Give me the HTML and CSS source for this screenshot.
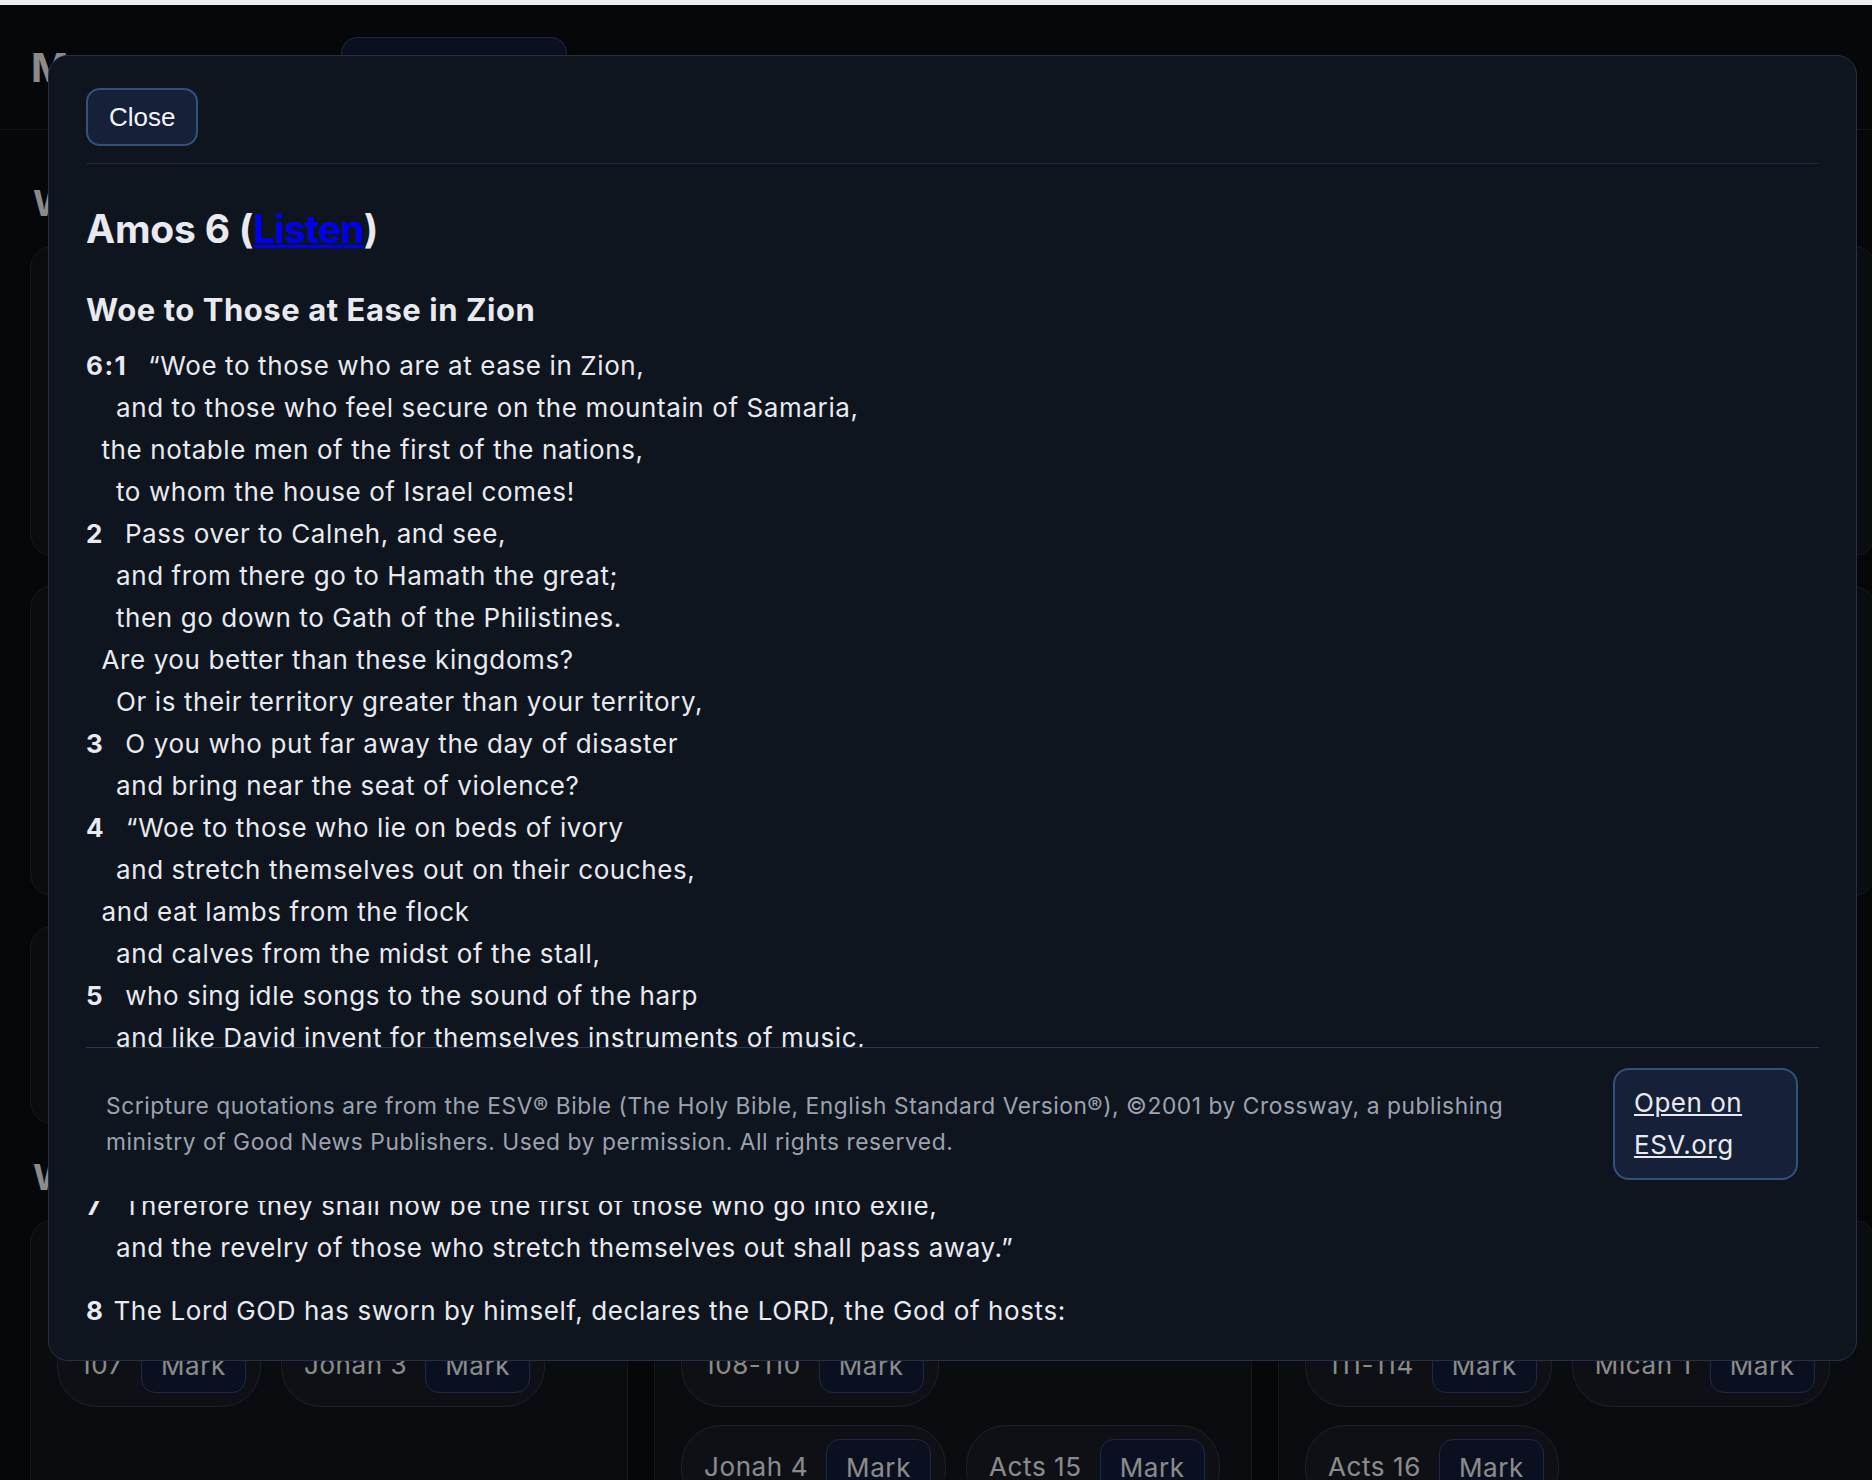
FILE: index.html
```
<!DOCTYPE html>
<html lang="en">
<head>
<meta charset="utf-8">
<title>Manna – M'Cheyne Reading Plan</title>
<link rel="stylesheet" href="styles.css">
</head>
<body>
<div class="chrome-strip"></div>
<header class="app-header">
  <h1 class="app-title">Manna</h1>
  <button class="hdr-btn" type="button">Today</button>
</header>
<main class="app-main">
  <section class="week">
    <h2 class="week-title">Week 14</h2>
    <div class="week-grid">
      <div class="day-card tall"></div>
      <div class="day-card tall"></div>
      <div class="day-card tall"></div>
      <div class="day-card tall"></div>
      <div class="day-card tall"></div>
      <div class="day-card tall"></div>
      <div class="day-card short"></div>
    </div>
  </section>
  <section class="week">
    <h2 class="week-title">Week 15</h2>
    <div class="week-grid">
      <div class="day-card">
        <div class="day-label">Day 99</div>
        <div class="pills">
          <div class="pill-row">
            <div class="pill"><span class="pill-ref">107</span><button class="mark-btn" type="button">Mark</button></div>
            <div class="pill"><span class="pill-ref">Jonah 3</span><button class="mark-btn" type="button">Mark</button></div>
          </div>
        </div>
      </div>
      <div class="day-card">
        <div class="day-label">Day 100</div>
        <div class="pills">
          <div class="pill-row">
            <div class="pill"><span class="pill-ref">108-110</span><button class="mark-btn" type="button">Mark</button></div>
          </div>
          <div class="pill-row">
            <div class="pill"><span class="pill-ref">Jonah 4</span><button class="mark-btn" type="button">Mark</button></div>
            <div class="pill"><span class="pill-ref">Acts 15</span><button class="mark-btn" type="button">Mark</button></div>
          </div>
        </div>
      </div>
      <div class="day-card">
        <div class="day-label">Day 101</div>
        <div class="pills">
          <div class="pill-row">
            <div class="pill"><span class="pill-ref">111-114</span><button class="mark-btn" type="button">Mark</button></div>
            <div class="pill"><span class="pill-ref">Micah 1</span><button class="mark-btn" type="button">Mark</button></div>
          </div>
          <div class="pill-row">
            <div class="pill"><span class="pill-ref">Acts 16</span><button class="mark-btn" type="button">Mark</button></div>
          </div>
        </div>
      </div>
    </div>
  </section>
</main>

<div class="backdrop"></div>

<div class="modal" role="dialog" aria-label="Amos 6">
  <div class="modal-head">
    <button class="close-btn" type="button">Close</button>
  </div>
  <div class="modal-body">
    <div class="passage">
      <h2 class="ch-title">Amos 6 (<a href="#" class="listen">Listen</a>)</h2>
      <h3 class="sec-title">Woe to Those at Ease in Zion</h3>
      <div class="poetry">
        <p class="ln"><b class="vn">6:1</b>“Woe to those who are at ease in Zion,</p>
        <p class="ln i2">and to those who feel secure on the mountain of Samaria,</p>
        <p class="ln i1">the notable men of the first of the nations,</p>
        <p class="ln i2">to whom the house of Israel comes!</p>
        <p class="ln"><b class="vn">2</b>Pass over to Calneh, and see,</p>
        <p class="ln i2">and from there go to Hamath the great;</p>
        <p class="ln i2">then go down to Gath of the Philistines.</p>
        <p class="ln i1">Are you better than these kingdoms?</p>
        <p class="ln i2">Or is their territory greater than your territory,</p>
        <p class="ln"><b class="vn">3</b>O you who put far away the day of disaster</p>
        <p class="ln i2">and bring near the seat of violence?</p>
        <p class="ln"><b class="vn">4</b>“Woe to those who lie on beds of ivory</p>
        <p class="ln i2">and stretch themselves out on their couches,</p>
        <p class="ln i1">and eat lambs from the flock</p>
        <p class="ln i2">and calves from the midst of the stall,</p>
        <p class="ln"><b class="vn">5</b>who sing idle songs to the sound of the harp</p>
        <p class="ln i2">and like David invent for themselves instruments of music,</p>
        <p class="ln"><b class="vn">6</b>who drink wine in bowls</p>
        <p class="ln i2">and anoint themselves with the finest oils,</p>
        <p class="ln i1">but are not grieved over the ruin of Joseph!</p>
        <p class="ln"><b class="vn">7</b>Therefore they shall now be the first of those who go into exile,</p>
        <p class="ln i2">and the revelry of those who stretch themselves out shall pass away.”</p>
      </div>
      <p class="prose"><b class="vn vn-prose">8</b>The Lord GOD has sworn by himself, declares the LORD, the God of hosts:</p>
      <div class="poetry">
        <p class="ln i1">“I abhor the pride of Jacob</p>
        <p class="ln i2">and hate his strongholds,</p>
        <p class="ln i1">and I will deliver up the city and all that is in it.”</p>
      </div>
    </div>
    <div class="esv-footer">
      <p class="copyright">Scripture quotations are from the ESV® Bible (The Holy Bible, English Standard Version®), ©2001 by Crossway, a publishing ministry of Good News Publishers. Used by permission. All rights reserved.</p>
      <a class="esv-link" href="#">Open on ESV.org</a>
    </div>
  </div>
</div>
</body>
</html>
```

FILE: styles.css
```
html, body {
  margin: 0;
  padding: 0;
  height: 100%;
  overflow: hidden;
}

body {
  background: #0a0c0f;
  color: #e8e8e8;
  font-family: Inter, "Noto Sans", sans-serif;
}

.chrome-strip {
  height: 5px;
  background: #ececec;
}

/* ---------- background app ---------- */
.app-header {
  height: 125px;
  box-sizing: border-box;
  display: flex;
  align-items: center;
  padding-left: 31px;
  border-bottom: 1px solid #23262d;
}

.app-title {
  margin: 0;
  font-size: 40px;
  font-weight: 700;
  color: #e8e8e8;
  width: 310px;
  white-space: nowrap;
}

.hdr-btn {
  width: 226px;
  height: 60px;
  border-radius: 16px;
  border: 1px solid #2f4672;
  background: #111c35;
  color: #e8e8e8;
  font: 26px Inter, sans-serif;
}

.app-main {
  height: 1350px;
  box-sizing: border-box;
  overflow: hidden;
  padding: 51px 0 0 30px;
}

.week + .week {
  margin-top: 31px;
}

.week-title {
  margin: 0 0 21px 3px;
  font-size: 36px;
  line-height: 44px;
  font-weight: 700;
  color: #e8e8e8;
}

.week-grid {
  display: grid;
  grid-template-columns: repeat(3, 598px);
  column-gap: 26px;
  row-gap: 30px;
  align-items: start;
}

.day-card {
  box-sizing: border-box;
  background: #12161c;
  border: 1px solid #232832;
  border-radius: 22px;
  padding: 28px 26px;
  min-height: 300px;
}

.day-card.tall { height: 310px; }
.day-card.short { height: 198px; min-height: 0; }

.day-label {
  font-size: 26px;
  line-height: 44px;
  font-weight: 700;
  margin-bottom: 30px;
}

.pills {
  display: flex;
  flex-direction: column;
  gap: 18px;
}

.pill-row {
  display: flex;
  gap: 20px;
}

.pill {
  display: flex;
  align-items: center;
  gap: 18px;
  height: 84px;
  box-sizing: border-box;
  padding: 13px 14px 13px 22px;
  border: 1px solid #2f3545;
  background: #191c25;
  border-radius: 40px;
}

.pill-ref {
  font-size: 26px;
  line-height: 30px;
  letter-spacing: 0.6px;
  color: #e8e8e8;
  white-space: nowrap;
}

.mark-btn {
  height: 56px;
  box-sizing: border-box;
  padding: 0 19px;
  border: 1px solid #2f4672;
  background: #111c35;
  border-radius: 14px;
  color: #e8e8e8;
  font: 26px Inter, sans-serif;
  letter-spacing: 0.6px;
}

/* ---------- overlay ---------- */
.backdrop {
  position: fixed;
  top: 5px;
  left: 0;
  right: 0;
  bottom: 0;
  background: rgba(0, 0, 0, 0.4);
}

.modal {
  position: fixed;
  top: 55px;
  left: 48px;
  width: 1809px;
  height: 1306px;
  box-sizing: border-box;
  background: #0f151f;
  border: 1px solid #243044;
  border-radius: 20px;
  padding: 32px 37px 31px;
  display: flex;
  flex-direction: column;
  color: #e8eaef;
  font-family: Inter, "Noto Sans", sans-serif;
}

.modal-head {
  padding-bottom: 17px;
  border-bottom: 1px solid #1f2836;
}

.close-btn {
  height: 58px;
  box-sizing: border-box;
  padding: 0 21px;
  border: 2px solid #34507c;
  background: #162139;
  border-radius: 14px;
  color: #f2f4f8;
  font: 26px "Liberation Sans", Arial, sans-serif;
}

.modal-body {
  flex: 1;
  position: relative;
  overflow: hidden;
}

.passage {
  padding-top: 41px;
}

.ch-title {
  margin: 0 0 39px;
  font-size: 39px;
  line-height: 47px;
  font-weight: 700;
  letter-spacing: -0.2px;
}

.listen {
  color: #0000ee;
  text-decoration: underline;
  letter-spacing: -0.9px;
}

.sec-title {
  margin: 0 0 16px;
  font-size: 31px;
  line-height: 38px;
  font-weight: 700;
  letter-spacing: 0.55px;
}

.poetry p,
.prose {
  margin: 0;
  font-size: 26px;
  line-height: 42px;
  letter-spacing: 0.6px;
  white-space: nowrap;
}

.ln.i1 { padding-left: 15.5px; }
.ln.i2 { padding-left: 30px; }

.vn {
  font-weight: 700;
  letter-spacing: 1.5px;
  margin-right: 21px;
}

.vn-prose {
  margin-right: 9px;
}

.prose {
  margin-top: 21px;
}

.esv-footer {
  position: absolute;
  top: 883px;
  left: 0;
  right: 0;
  box-sizing: border-box;
  display: flex;
  align-items: center;
  gap: 44px;
  padding: 20px 21px 21px 20px;
  background: #0f151f;
  border-top: 1px solid #2a3750;
}

.copyright {
  flex: 1;
  margin: 0;
  font-size: 22.75px;
  line-height: 36.4px;
  letter-spacing: 0.56px;
  color: #9ca3af;
}

.esv-link {
  flex: none;
  width: 185px;
  box-sizing: border-box;
  padding: 12px 19px;
  border: 2px solid #34507c;
  background: #162139;
  border-radius: 16px;
  color: #e8eaef;
  font-size: 26px;
  line-height: 42px;
  letter-spacing: 0.5px;
  text-decoration: underline;
}
```
